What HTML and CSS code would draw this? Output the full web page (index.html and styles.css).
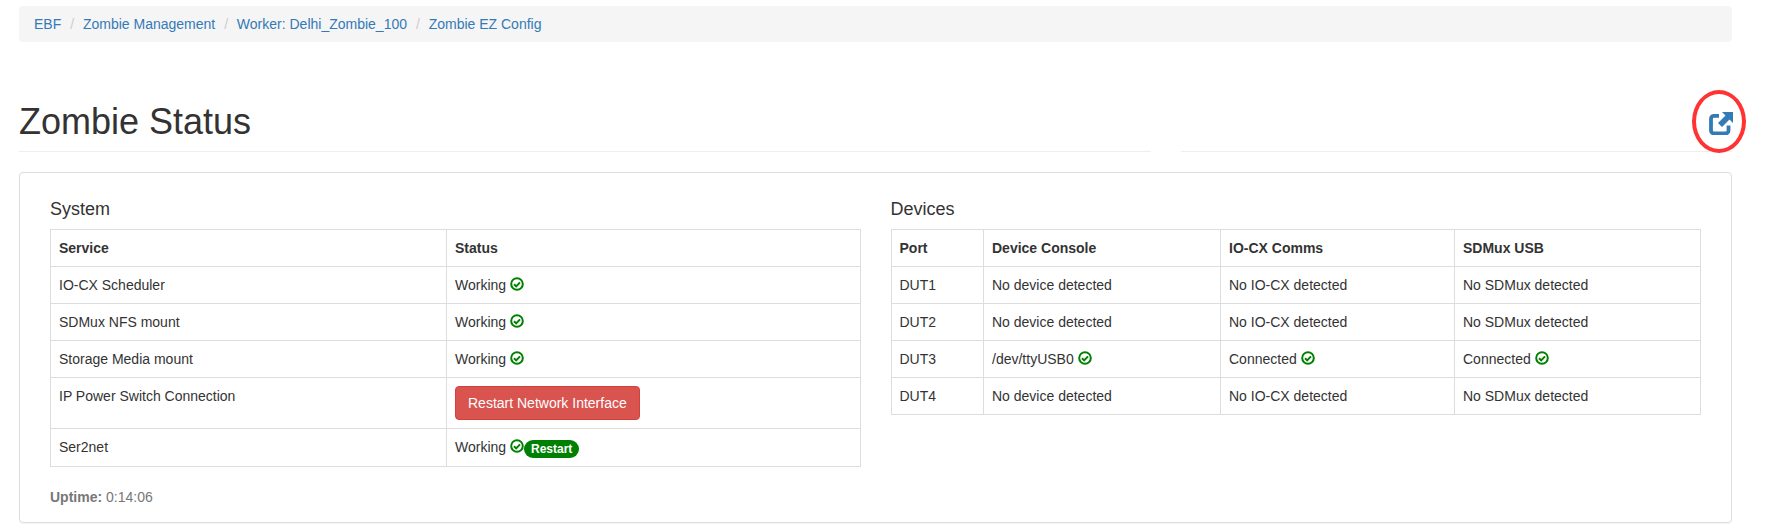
FILE: index.html
```html
<!DOCTYPE html>
<html lang="en">
<head>
<meta charset="utf-8">
<title>Zombie Status</title>
<link rel="stylesheet" href="styles.css">
</head>
<body>
<svg class="sprite" width="0" height="0" aria-hidden="true">
  <defs>
    <symbol id="check" viewBox="0 0 14 14">
      <circle cx="7" cy="7" r="5.800" fill="none" stroke="currentColor" stroke-width="2"/>
      <path d="M4 7.200 6.200 9.400 10 5.400" fill="none" stroke="currentColor" stroke-width="2"/>
    </symbol>
  </defs>
</svg>
<div class="page">
  <ol class="breadcrumb">
    <li><a href="#">EBF</a></li>
    <li><a href="#">Zombie Management</a></li>
    <li><a href="#">Worker: Delhi_Zombie_100</a></li>
    <li><a href="#">Zombie EZ Config</a></li>
  </ol>
  <div class="header-row">
    <div class="page-header"><h1>Zombie Status</h1></div>
    <div class="page-header action">
      <a href="#" class="open-link" aria-label="Open">
        <svg class="open-icon" viewBox="0 0 24 23" width="24" height="23">
          <path d="M10 3.800H5A3 3 0 0 0 2 6.800V18.500A3 3 0 0 0 5 21.500H16.500A3 3 0 0 0 19.500 18.500V13.500" fill="none" stroke="currentColor" stroke-width="3.800"/>
          <path d="M13 0H24V11L20.500 7.500 13 15 9 11 16.500 3.500Z" fill="currentColor"/>
        </svg>
      </a>
      <span class="annotation"></span>
    </div>
  </div>
  <div class="panel">
    <div class="columns">
      <section>
        <h4>System</h4>
        <table>
          <colgroup><col class="c-service"><col></colgroup>
          <thead><tr><th>Service</th><th>Status</th></tr></thead>
          <tbody>
            <tr><td>IO-CX Scheduler</td><td>Working <svg class="ok"><use href="#check"/></svg></td></tr>
            <tr><td>SDMux NFS mount</td><td>Working <svg class="ok"><use href="#check"/></svg></td></tr>
            <tr><td>Storage Media mount</td><td>Working <svg class="ok"><use href="#check"/></svg></td></tr>
            <tr><td>IP Power Switch Connection</td><td><button class="btn">Restart Network Interface</button></td></tr>
            <tr><td>Ser2net</td><td>Working <svg class="ok"><use href="#check"/></svg><span class="badge">Restart</span></td></tr>
          </tbody>
        </table>
        <p class="uptime"><strong>Uptime:</strong> 0:14:06</p>
      </section>
      <section>
        <h4>Devices</h4>
        <table>
          <colgroup><col class="c-port"><col class="c-console"><col class="c-comms"><col></colgroup>
          <thead><tr><th>Port</th><th>Device Console</th><th>IO-CX Comms</th><th>SDMux USB</th></tr></thead>
          <tbody>
            <tr><td>DUT1</td><td>No device detected</td><td>No IO-CX detected</td><td>No SDMux detected</td></tr>
            <tr><td>DUT2</td><td>No device detected</td><td>No IO-CX detected</td><td>No SDMux detected</td></tr>
            <tr><td>DUT3</td><td>/dev/ttyUSB0 <svg class="ok"><use href="#check"/></svg></td><td>Connected <svg class="ok"><use href="#check"/></svg></td><td>Connected <svg class="ok"><use href="#check"/></svg></td></tr>
            <tr><td>DUT4</td><td>No device detected</td><td>No IO-CX detected</td><td>No SDMux detected</td></tr>
          </tbody>
        </table>
      </section>
    </div>
  </div>
</div>
</body>
</html>
```
FILE: styles.css
```css
* { box-sizing: border-box; }
html, body { margin: 0; overflow: hidden; }
body {
  font-family: "Liberation Sans", Arial, sans-serif;
  font-size: 14px;
  line-height: 20px;
  color: #333;
  background: #fff;
}
a { color: #337ab7; text-decoration: none; }
.sprite { position: absolute; }
.page { padding: 6px 40px 5px 19px; width: 1772px; }
.breadcrumb {
  display: flex;
  list-style: none;
  margin: 0 0 60px;
  padding: 8px 15px;
  background: #f5f5f5;
  border-radius: 4px;
}
.breadcrumb li + li::before { content: "/"; color: #ccc; padding: 0 8.780px 0 5px; margin-left: 4px; }
.header-row { display: grid; grid-template-columns: 1132px 551px; column-gap: 30px; }
.page-header { border-bottom: 1px solid #eee; padding-bottom: 9px; margin-bottom: 20px; height: 50px; }
h1 { margin: 0; font-size: 36px; font-weight: 500; line-height: 39.600px; }
.action { position: relative; display: flex; justify-content: flex-end; }
.open-link { display: block; margin-top: 10px; margin-right: -1px; }
.open-icon { display: block; }
.annotation {
  position: absolute;
  right: -14px;
  top: -12px;
  width: 54px;
  height: 63px;
  border: 4px solid #f33;
  border-radius: 50%;
}
.panel {
  border: 1px solid #ddd;
  border-radius: 4px;
  box-shadow: 0 1px 1px rgba(0, 0, 0, .05);
  padding: 15px 30px;
}
.columns { display: grid; grid-template-columns: 810.500px 810.500px; column-gap: 30px; }
h4 { margin: 11px 0 10px; font-size: 18px; font-weight: 500; line-height: 20px; }
table { width: 100%; table-layout: fixed; border-collapse: collapse; }
th, td { border: 1px solid #ddd; padding: 8px; text-align: left; vertical-align: top; }
th { font-weight: 700; }
.c-service { width: 396px; }
.c-port { width: 92.500px; }
.c-console { width: 237px; }
.c-comms { width: 234px; }
.ok { width: 14px; height: 14px; color: #008000; vertical-align: -1px; }
.btn {
  display: block;
  height: 34px;
  padding: 6px 12px;
  font: inherit;
  color: #fff;
  background: #d9534f;
  border: 1px solid #d43f3a;
  border-radius: 4px;
}
.badge {
  display: inline-block;
  padding: 3px 7px;
  font-size: 12px;
  font-weight: 700;
  line-height: 12px;
  color: #fff;
  background: #008000;
  border-radius: 10px;
  vertical-align: -1px;
}
.uptime { margin: 20px 0 0; color: #777; }
```
